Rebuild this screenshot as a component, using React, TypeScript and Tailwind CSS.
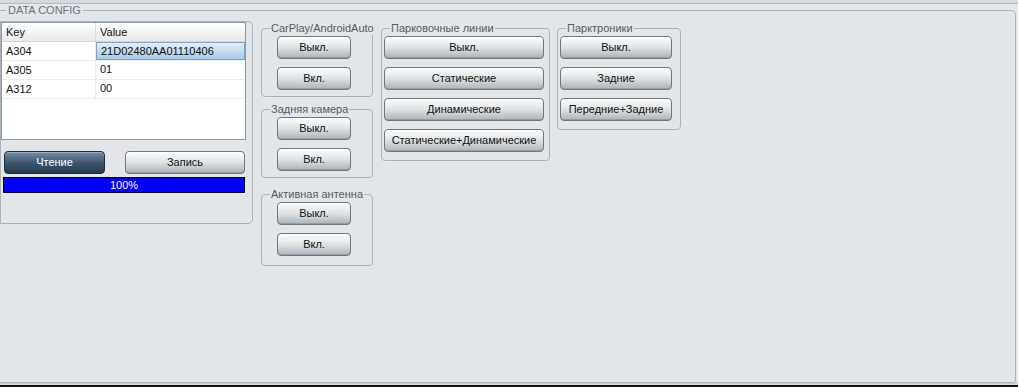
import React from "react";

const rows = [
  { key: "A304", value: "21D02480AA01110406", selected: true },
  { key: "A305", value: "01" },
  { key: "A312", value: "00" },
];

function Btn({ label, className = "" }: { label: string; className?: string }) {
  return (
    <button
      className={`h-[23px] rounded-[4px] border border-[#6e7883] bg-linear-to-b from-[#fdfdfd] via-[#dfe2e4] to-[#adb3b9] text-[11px] text-[#111] shadow-[inset_0_-1px_0_#959ca3,inset_0_1px_0_#ffffff] ${className}`}
    >
      {label}
    </button>
  );
}

function Group({
  title,
  children,
  className = "",
  inner = "",
}: {
  title: string;
  children: React.ReactNode;
  className?: string;
  inner?: string;
}) {
  return (
    <fieldset className={`min-w-0 border border-[#a9b3bd] rounded-[4px] p-0 ${className}`}>
      <legend className="ml-[8px] px-[1px] whitespace-nowrap leading-[14px] text-[11px] text-[#555b61]">
        {title}
      </legend>
      <div className={`flex flex-col gap-[8px] pt-[1px] ${inner}`}>{children}</div>
    </fieldset>
  );
}

export default function App() {
  return (
    <div className="w-[1018px] h-[387px] bg-[#e3e6e9] flex flex-col font-['Liberation_Sans',Arial,sans-serif] text-[11px] text-[#111] overflow-hidden">
      <div className="h-[4px] bg-[#d3d9df] border-b border-[#b3bcc5]" />
      <fieldset className="flex-1 border border-l-0 border-[#a9b3bd] rounded-tr-[5px] rounded-br-[3px] mr-[2px] p-0 min-h-0">
        <legend className="ml-[6px] px-[2px] leading-[13px] text-[11px] text-[#6b747e]">DATA CONFIG</legend>
        <div className="flex items-start pt-[4px]">
          {/* left panel */}
          <div className="w-[253px] h-[203px] border border-[#a9b3bd] rounded-r-[5px] flex flex-col">
            <div className="w-[245px] h-[118px] bg-white border border-[#8e9aa6]">
              <div className="flex h-[19px] bg-linear-to-b from-white to-[#e9e9e9] border-b border-[#d5d8db]">
                <div className="w-[94px] pl-[4px] leading-[19px] border-r border-[#dcdcdc]">Key</div>
                <div className="flex-1 pl-[4px] leading-[19px]">Value</div>
              </div>
              {rows.map((r) => (
                <div key={r.key} className="flex h-[19px] border-b border-[#ececec]">
                  <div className="w-[94px] pl-[4px] leading-[19px] border-r border-[#ececec]">{r.key}</div>
                  <div
                    className={`flex-1 pl-[4px] leading-[17px] ${
                      r.selected
                        ? "bg-linear-to-b from-[#e2eef8] to-[#a9c9e3] border border-[#7fa4c4]"
                        : ""
                    }`}
                  >
                    {r.value}
                  </div>
                </div>
              ))}
            </div>
            <div className="flex mt-[11px] ml-[3px] gap-[20px]">
              <button className="w-[101px] h-[23px] rounded-[4px] border border-[#1d2c3a] bg-linear-to-b from-[#7590a8] via-[#3f5870] to-[#23384b] text-white text-[11px] shadow-[inset_0_1px_0_#97aec2]">
                Чтение
              </button>
              <Btn label="Запись" className="w-[120px]" />
            </div>
            <div className="ml-[2px] mt-[3px] w-[242px] h-[16px] bg-[#0000ff] border border-black text-white text-center leading-[14px]">
              100%
            </div>
          </div>

          {/* column 2 */}
          <div className="ml-[8px] w-[112px] flex flex-col">
            <Group title="CarPlay/AndroidAuto" inner="pl-[15px] pb-[6px]">
              <Btn label="Выкл." className="w-[74px]" />
              <Btn label="Вкл." className="w-[74px]" />
            </Group>
            <Group title="Задняя камера" className="mt-[5px]" inner="pl-[15px] pb-[6px]">
              <Btn label="Выкл." className="w-[74px]" />
              <Btn label="Вкл." className="w-[74px]" />
            </Group>
            <Group title="Активная антенна" className="mt-[9px]" inner="pl-[15px] pb-[9px]">
              <Btn label="Выкл." className="w-[74px]" />
              <Btn label="Вкл." className="w-[74px]" />
            </Group>
          </div>

          {/* column 3 */}
          <Group title="Парковочные линии" className="ml-[8px] w-[169px]" inner="pl-[2px] pb-[8px]">
            <Btn label="Выкл." className="w-[160px]" />
            <Btn label="Статические" className="w-[160px]" />
            <Btn label="Динамические" className="w-[160px]" />
            <Btn label="Статические+Динамические" className="w-[160px]" />
          </Group>

          {/* column 4 */}
          <Group title="Парктроники" className="ml-[7px] w-[124px]" inner="pl-[2px] pb-[8px]">
            <Btn label="Выкл." className="w-[112px]" />
            <Btn label="Задние" className="w-[112px]" />
            <Btn label="Передние+Задние" className="w-[112px]" />
          </Group>
        </div>
      </fieldset>
      <div className="h-[4px] bg-[#dde2e7] border-t border-[#c4ccd4] border-b-[2px] border-b-[#111]" />
    </div>
  );
}
